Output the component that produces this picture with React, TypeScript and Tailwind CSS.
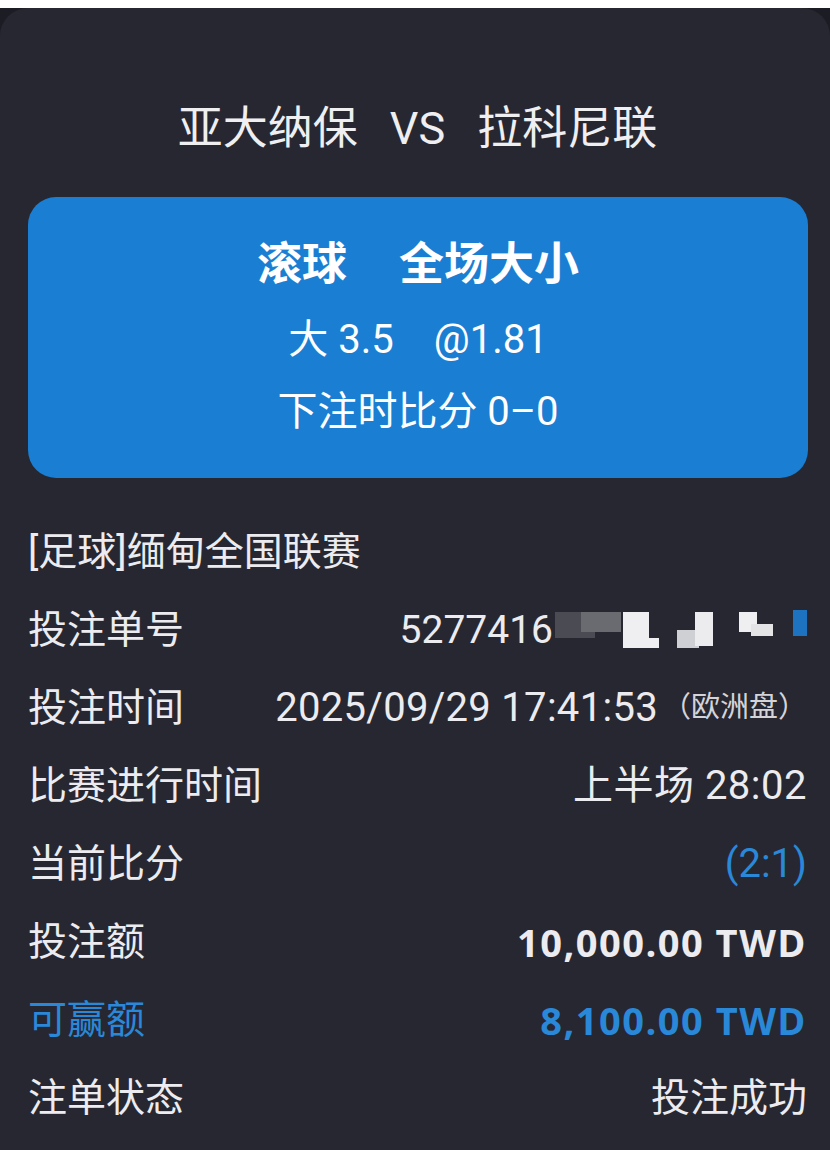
import React from 'react';

const FONT = { fontFamily: 'Roboto, "Noto Sans CJK SC", "Noto Sans", sans-serif' };
const AMOUNT = { fontFamily: '"Open Sans", Roboto, "Noto Sans CJK SC", sans-serif' };

interface RowProps {
  label: string;
  children: React.ReactNode;
  labelClass?: string;
}

const Row: React.FC<RowProps> = ({ label, children, labelClass = 'text-[#ececf0]' }) => (
  <div className="flex h-[78px] items-center justify-between">
    <span className={`text-[39px] ${labelClass}`}>{label}</span>
    <div className="flex items-center">{children}</div>
  </div>
);

const Mosaic: React.FC = () => (
  <div className="relative ml-[2px] h-[40px] w-[252px]">
    <div className="absolute left-[0px] top-[2px] h-[26px] w-[40px] bg-[#55565d] opacity-80" />
    <div className="absolute left-[26px] top-[2px] h-[20px] w-[40px] bg-[#6a6b71]" />
    <div className="absolute left-[68px] top-[2px] h-[30px] w-[26px] bg-[#efeff1]" />
    <div className="absolute left-[68px] top-[28px] h-[10px] w-[36px] bg-[#efeff1]" />
    <div className="absolute left-[122px] top-[20px] h-[18px] w-[22px] bg-[#cfd0d3]" />
    <div className="absolute left-[140px] top-[2px] h-[34px] w-[18px] bg-[#ececee]" />
    <div className="absolute left-[184px] top-[2px] h-[20px] w-[18px] bg-[#efeff1]" />
    <div className="absolute left-[196px] top-[14px] h-[12px] w-[22px] bg-[#e4e4e7]" />
    <div className="absolute left-[238px] top-[0px] h-[26px] w-[14px] bg-[#1e73c0]" />
  </div>
);

export default function App() {
  return (
    <div className="min-h-[1150px] w-[830px] bg-[#1c1d24]" style={FONT}>
      <div className="mt-[8px] min-h-[1142px] rounded-t-[28px] bg-[#272731] pl-[28px] pr-[23px]">
        <div className="flex h-[189px] items-end justify-center pb-[38px]">
          <h1 className="flex gap-[32px] text-[45px] leading-[60px] text-[#efeff2]">
            <span>亚大纳保</span>
            <span>VS</span>
            <span>拉科尼联</span>
          </h1>
        </div>
        <div className="flex h-[281px] w-[780px] flex-col items-center rounded-[28px] bg-[#1a7ed3] pt-[40px] text-white">
          <div className="flex gap-[52px] text-[45px] font-bold leading-[56px]">
            <span>滚球</span>
            <span>全场大小</span>
          </div>
          <div className="mt-[22px] flex gap-[40px] text-[40px] leading-[50px]">
            <span>大 3.5</span>
            <span>@1.81</span>
          </div>
          <div className="mt-[22px] text-[40px] leading-[50px]">下注时比分 0–0</div>
        </div>
        <div className="mt-[35px] flex h-[78px] items-center">
          <span className="text-[39px] text-[#ececf0]">[足球]缅甸全国联赛</span>
        </div>
        <Row label="投注单号">
          <span className="text-[39px] text-[#ececf0]">5277416</span>
          <Mosaic />
        </Row>
        <Row label="投注时间">
          <span className="text-[40px] tracking-[0.3px] text-[#ececf0]">2025/09/29 17:41:53</span>
          <span className="ml-[4px] text-[29px] text-[#d4d4d8]">（欧洲盘）</span>
        </Row>
        <Row label="比赛进行时间">
          <span className="text-[40px] tracking-[0.5px] text-[#ececf0]">上半场 28:02</span>
        </Row>
        <Row label="当前比分">
          <span className="text-[40px] text-[#2a88d8]">(2:1)</span>
        </Row>
        <Row label="投注额">
          <span className="text-[38px] font-bold tracking-[1.5px] text-[#ececf0]" style={AMOUNT}>
            10,000.00 TWD
          </span>
        </Row>
        <Row label="可赢额" labelClass="text-[#2a88d8]">
          <span className="text-[38px] font-bold tracking-[1.5px] text-[#2a88d8]" style={AMOUNT}>
            8,100.00 TWD
          </span>
        </Row>
        <Row label="注单状态">
          <span className="text-[39px] text-[#ececf0]">投注成功</span>
        </Row>
      </div>
    </div>
  );
}
